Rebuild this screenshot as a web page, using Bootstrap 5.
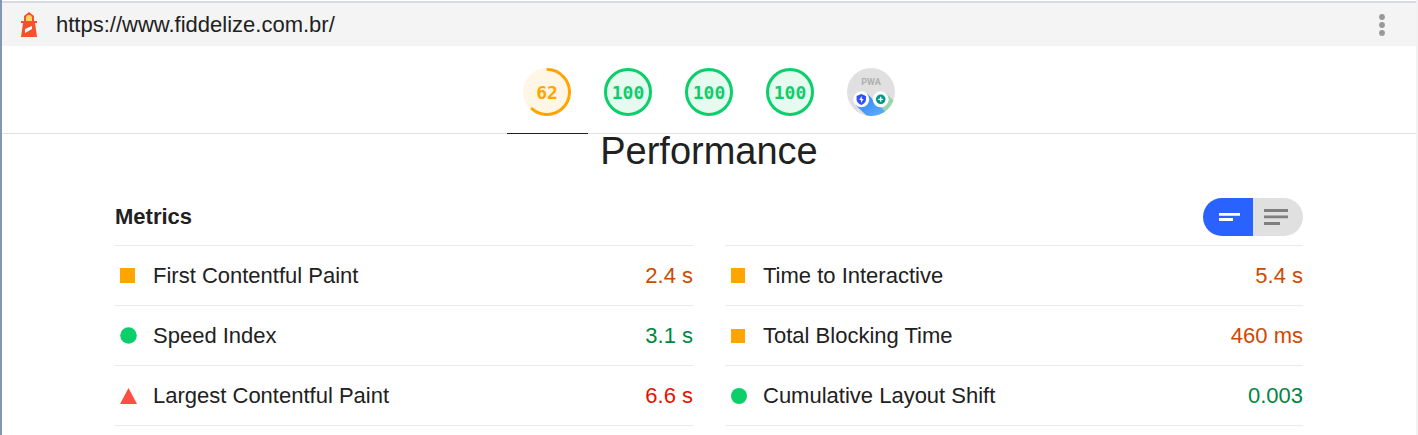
<!DOCTYPE html>
<html lang="en">
<head>
<meta charset="utf-8">
<meta name="viewport" content="width=device-width, initial-scale=1">
<title>Lighthouse report</title>
<link href="https://cdn.jsdelivr.net/npm/bootstrap@5.3.0/dist/css/bootstrap.min.css" rel="stylesheet">
<style>
  body { font-family: "Liberation Sans", Arial, sans-serif; font-size: 22px; line-height: 28px; color: #212121; background: #fff; }
  .report { border-left: 2px solid #8496b8; border-right: 2px solid #f2f2f2; padding-top: 1px; }
  .topbar { height: 45px; padding: 0 20px 0 19px; background: #f4f4f4; border-top: 2px solid #d9dbe2; }
  .topbar a { color: #212121; margin-left: 19px; }
  .menu-btn { width: 28px; height: 38px; line-height: 1; }
  .scores { height: 88px; border-bottom: 1px solid #e0e0e0; }
  .score { width: 81px; height: 88px; padding-top: 22px; border-bottom: 1px solid transparent; }
  .score.active { border-bottom-color: #212121; }
  .score text { font: bold 18px "DejaVu Sans Mono", monospace; text-anchor: middle; }
  .score .pwa-name { font: bold 9px Roboto, sans-serif; fill: #b0b0b0; }
  .avg { fill: #ffa400; } .good { fill: #0cce6b; }
  .report-body { max-width: 1188px; }
  .category-title { font-size: 38px; line-height: 34px; margin-bottom: 30px; }
  .metrics-title { font-size: 22px; line-height: 28px; }
  .metrics-head { padding-bottom: 9px; }
  .view-toggle .btn { width: 50px; height: 38px; background: #e0e0e0; color: #808080; border: 0; }
  .view-toggle .btn:first-of-type { border-radius: 19px 0 0 19px; }
  .view-toggle .btn:last-of-type { border-radius: 0 19px 19px 0; }
  .view-toggle.btn-group > .btn-check + .btn.btn { margin-left: 0 !important; }
  .view-toggle .btn-check:checked + .btn { background: #2962ff; color: #fff; }
  .metric-grid { column-gap: 32px; }
  .metric-list { border-top: 1px solid #ebebeb; }
  .metric { height: 60px; border-bottom: 1px solid #ebebeb; padding-left: 5px; }
  .metric svg { width: 17px; height: 17px; margin-right: 16px; }
  .val-good { color: #018642; } .val-avg { color: #d04900; } .val-poor { color: #eb0f00; }
</style>
</head>
<body>
<div class="report min-vh-100">
  <header>
    <div class="topbar d-flex align-items-center">
      <svg width="16" height="26" viewBox="0 0 16 26" aria-hidden="true">
        <path d="M3 4 8 0l5 4v5H3z" fill="#f4512c"/>
        <path d="M5 9V6a3 3 0 0 1 6 0v3z" fill="#fdd663"/>
        <path d="M0 9h3V4h2v5h6V4h2v5h3v2h-2l2 14H0l2-14H0z" fill="#f4512c"/>
        <path d="M4 17l7-3v3l-7 4z" fill="#fff"/>
      </svg>
      <a href="https://www.fiddelize.com.br/" class="text-decoration-none">https://www.fiddelize.com.br/</a>
      <button type="button" class="menu-btn btn p-0 border-0 ms-auto" aria-label="Tools menu">
        <svg width="8" height="24" viewBox="0 0 8 24" fill="#999"><circle cx="4" cy="4" r="2.900"/><circle cx="4" cy="12" r="2.900"/><circle cx="4" cy="20" r="2.900"/></svg>
      </button>
    </div>
    <nav class="scores d-flex justify-content-center" aria-label="Categories">
      <a class="score active text-center lh-1" href="#performance" aria-label="Performance"><svg width="48" height="48" viewBox="0 0 48 48">
        <circle class="avg" cx="24" cy="24" r="24" opacity=".1"/>
        <circle cx="24" cy="24" r="22.500" fill="none" stroke="#ffa400" stroke-width="3" stroke-linecap="round" pathLength="100" stroke-dasharray="61 100" transform="rotate(-88 24 24)"/>
        <text class="avg" x="24" y="31">62</text></svg></a>
      <a class="score text-center lh-1" href="#accessibility" aria-label="Accessibility"><svg width="48" height="48" viewBox="0 0 48 48">
        <circle class="good" cx="24" cy="24" r="24" opacity=".1"/><circle cx="24" cy="24" r="22.500" fill="none" stroke="#0cce6b" stroke-width="3"/>
        <text class="good" x="24" y="31">100</text></svg></a>
      <a class="score text-center lh-1" href="#best-practices" aria-label="Best practices"><svg width="48" height="48" viewBox="0 0 48 48">
        <circle class="good" cx="24" cy="24" r="24" opacity=".1"/><circle cx="24" cy="24" r="22.500" fill="none" stroke="#0cce6b" stroke-width="3"/>
        <text class="good" x="24" y="31">100</text></svg></a>
      <a class="score text-center lh-1" href="#seo" aria-label="SEO"><svg width="48" height="48" viewBox="0 0 48 48">
        <circle class="good" cx="24" cy="24" r="24" opacity=".1"/><circle cx="24" cy="24" r="22.500" fill="none" stroke="#0cce6b" stroke-width="3"/>
        <text class="good" x="24" y="31">100</text></svg></a>
      <a class="score text-center lh-1" href="#pwa" aria-label="Progressive Web App"><svg width="48" height="48" viewBox="0 0 48 48">
        <defs>
          <clipPath id="disc"><circle cx="24" cy="24" r="24"/></clipPath>
          <linearGradient id="blue" x1="0" y1="0" x2="1" y2="1"><stop offset="0" stop-color="#2979ff"/><stop offset="1" stop-color="#64b5f6"/></linearGradient>
        </defs>
        <g clip-path="url(#disc)">
          <rect width="48" height="48" fill="#e0e0e0"/>
          <path d="M39.500 25.500 62 48H39L28 37z" fill="#9bd5b0"/>
          <path d="M20 25.500 42.500 48H20L8.500 37z" fill="url(#blue)"/>
        </g>
        <text class="pwa-name" x="24" y="17">PWA</text>
        <circle cx="14.300" cy="31.300" r="8" fill="#fff"/><circle cx="33.700" cy="31.300" r="8" fill="#fff"/>
        <path d="M14.300 26l4.700 2v3.500c0 2.500-2 4.500-4.700 5.500-2.700-1-4.700-3-4.700-5.500V28z" fill="#304ffe"/>
        <path d="M14.800 28l-2.600 4h1.800v3l2.600-4h-1.800z" fill="#fff"/>
        <circle cx="33.700" cy="31.300" r="4.800" fill="#009688"/>
        <path d="M33.700 28.800v5M31.200 31.300h5" stroke="#fff" stroke-width="1.300"/>
      </svg></a>
    </nav>
  </header>

  <main class="report-body mx-auto" id="performance">
    <h1 class="category-title fw-normal text-center">Performance</h1>
    <div class="metrics-head d-flex align-items-center justify-content-between">
      <h2 class="metrics-title fw-bold m-0">Metrics</h2>
      <div class="view-toggle btn-group" role="group" aria-label="Metric detail">
        <input type="radio" class="btn-check" name="detail" id="view-short" checked>
        <label class="btn p-0 d-flex align-items-center justify-content-center" for="view-short" aria-label="Short view">
          <svg width="24" height="18" viewBox="0 0 24 18" fill="currentColor"><path d="M3 5h21v2.700H3zM3 10h14v3H3z"/></svg>
        </label>
        <input type="radio" class="btn-check" name="detail" id="view-long">
        <label class="btn p-0 d-flex align-items-center justify-content-center" for="view-long" aria-label="Expanded view">
          <svg width="28" height="18" viewBox="0 0 28 18" fill="currentColor"><path d="M0 1h24v3H0zM0 7.500h24v2.700H0zM0 14h16v3H0z"/></svg>
        </label>
      </div>
    </div>
    <div class="metric-grid d-flex">
      <div class="metric-list flex-fill w-50">
        <div class="metric d-flex align-items-center"><svg viewBox="0 0 17 17"><path class="avg" d="M0 1h15v15H0z"/></svg><span>First Contentful Paint</span><span class="val-avg ms-auto">2.4 s</span></div>
        <div class="metric d-flex align-items-center"><svg viewBox="0 0 17 17"><circle class="good" cx="8.500" cy="8.500" r="8.300"/></svg><span>Speed Index</span><span class="val-good ms-auto">3.1 s</span></div>
        <div class="metric d-flex align-items-center"><svg viewBox="0 0 17 17"><path d="M8.500 1 17 17H0z" fill="#ff4e42"/></svg><span>Largest Contentful Paint</span><span class="val-poor ms-auto">6.6 s</span></div>
      </div>
      <div class="metric-list flex-fill w-50">
        <div class="metric d-flex align-items-center"><svg viewBox="0 0 17 17"><path class="avg" d="M1 1h14v15H1z"/></svg><span>Time to Interactive</span><span class="val-avg ms-auto">5.4 s</span></div>
        <div class="metric d-flex align-items-center"><svg viewBox="0 0 17 17"><path class="avg" d="M1 2h14v14H1z"/></svg><span>Total Blocking Time</span><span class="val-avg ms-auto">460 ms</span></div>
        <div class="metric d-flex align-items-center"><svg viewBox="0 0 17 17"><circle class="good" cx="9" cy="9" r="8"/></svg><span>Cumulative Layout Shift</span><span class="val-good ms-auto">0.003</span></div>
      </div>
    </div>
  </main>
</div>
<script src="https://cdn.jsdelivr.net/npm/bootstrap@5.3.0/dist/js/bootstrap.bundle.min.js"></script>
</body>
</html>
